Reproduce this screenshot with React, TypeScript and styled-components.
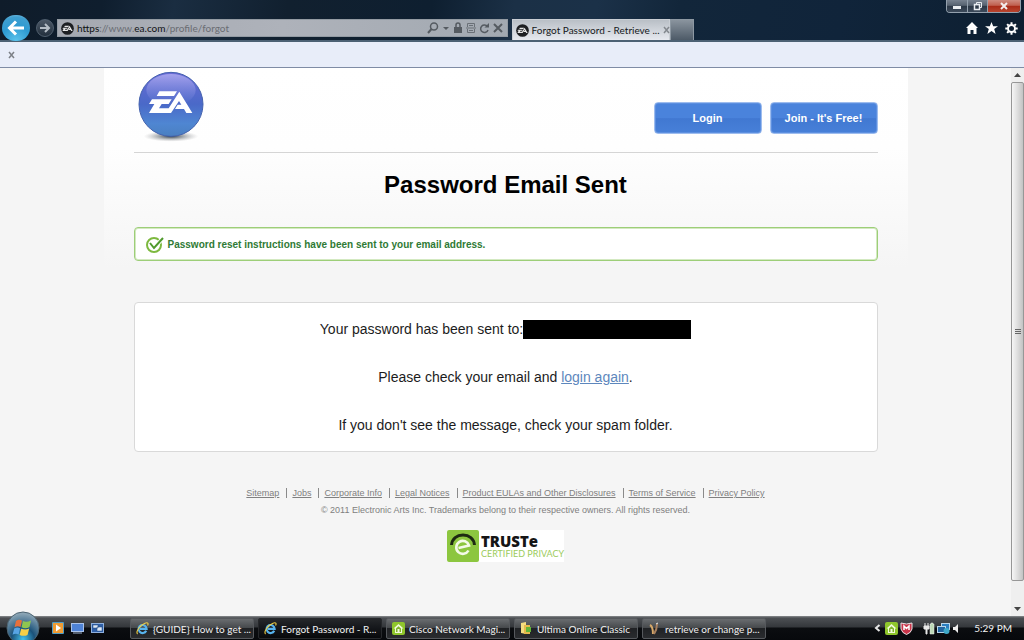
import React from "react";
import styled, { createGlobalStyle, css } from "styled-components";

const GlobalStyle = createGlobalStyle`
  *, *::before, *::after { box-sizing: border-box; }
  body { margin: 0; background: #f5f5f5; font-family: "Liberation Sans", Arial, sans-serif; }
  button { font: inherit; border: 0; padding: 0; background: none; color: inherit; cursor: pointer; }
  p, h1, ul { margin: 0; padding: 0; }
  svg { display: block; flex: none; }
`;

const uiFont = css`
  font-family: Lato, "Open Sans", sans-serif;
  font-size: 10px;
`;

const Desktop = styled.div`
  display: flex;
  flex-direction: column;
  height: 100vh;
  overflow: hidden;
`;

/* Browser frame */

const Chrome = styled.header`
  ${uiFont}
  flex: none;
  display: flex;
  flex-direction: column;
  height: 42px;
  border-bottom: 2px solid #4c6174;
  background: linear-gradient(100deg, #0f1c2a 0%, #0f1e2e 10%, #1a2d41 17%, #11202f 28%, #0e1f30 42%, #1b3046 50%, #1b3148 58%, #12263a 66%, #10243a 82%, #0d1f31 100%);
`;

const TitleBar = styled.div`
  display: flex;
  justify-content: flex-end;
  height: 17px;
  padding-right: 3px;
`;

const WindowButtons = styled.div`
  display: flex;
  height: 13px;
  border: 1px solid #93a0ad;
  border-top: 0;
  border-radius: 0 0 4px 4px;
  overflow: hidden;
`;

const WindowButton = styled.button<{ $close?: boolean }>`
  display: flex;
  align-items: center;
  justify-content: center;
  width: ${(p) => (p.$close ? 33 : 20)}px;
  border-left: ${(p) => (p.$close ? "1px solid #93a0ad" : "0")};
  background: ${(p) =>
    p.$close
      ? "linear-gradient(#cf8c80 0, #c0604f 45%, #a82a17 50%, #b8452f 100%)"
      : "linear-gradient(#76818f 0, #566270 45%, #2b3746 50%, #3c4a5b 100%)"};
  & + & { border-left: 1px solid #93a0ad; }
`;

const NavRow = styled.div`
  display: flex;
  align-items: center;
  height: 24px;
`;

const BackButton = styled.button`
  display: flex;
  align-items: center;
  justify-content: center;
  flex: none;
  width: 28px;
  height: 26px;
  margin: 0 6px 0 2px;
  border-radius: 14px;
  background: radial-gradient(circle at 50% 100%, #5cc3ec 0, #2e9bd2 50%, #3f9fd0 80%, #8cc6e2 100%);
`;

const ForwardButton = styled.button`
  display: flex;
  align-items: center;
  justify-content: center;
  flex: none;
  width: 18px;
  height: 18px;
  margin-right: 3px;
  border: 1px solid #51606f;
  border-radius: 9px;
  background: linear-gradient(#4c5866, #222f3d);
`;

const AddressBar = styled.div`
  display: flex;
  align-items: center;
  gap: 3px;
  flex: none;
  width: 44%;
  height: 18px;
  padding: 0 4px 0 3px;
  border: 1px solid #939ba3;
  background: linear-gradient(90deg, #a5a9b1, #aeb2ba 50%, #a2a9b1);
`;

const AddressText = styled.div`
  flex: 1;
  min-width: 0;
  color: #6a6d73;
  white-space: nowrap;
  overflow: hidden;
  b { font-weight: 400; color: #101214; }
`;

const AddressIcons = styled.div`
  display: flex;
  align-items: center;
  gap: 3px;
`;

const IconButton = styled.button`
  display: flex;
  align-items: center;
  justify-content: center;
`;

const Tabs = styled.div`
  display: flex;
  flex: 1;
  min-width: 0;
  align-self: stretch;
  margin-left: 4px;
  padding-top: 3px;
`;

const Tab = styled.div`
  display: flex;
  align-items: center;
  gap: 3px;
  width: 158px;
  padding: 0 4px 0 3px;
  border: 1px solid #c9ced4;
  border-bottom: 0;
  color: #15181b;
  white-space: nowrap;
  background: linear-gradient(#b9bfc6, #e6e9ef);
  span { flex: 1; }
`;

const NewTab = styled.button`
  width: 24px;
  border: 1px solid #8d98a2;
  border-bottom: 0;
  background: linear-gradient(#8a949e, #4d5a67);
`;

const Tools = styled.div`
  display: flex;
  align-items: center;
  gap: 7px;
  padding-right: 6px;
`;

const FindBar = styled.div`
  ${uiFont}
  flex: none;
  display: flex;
  align-items: center;
  height: 26px;
  padding-left: 8px;
  border-bottom: 1px solid #7f8ca5;
  background: #e8edf9;
`;

/* Page */

const Viewport = styled.div`
  flex: 1;
  min-height: 0;
  display: flex;
  background: #f5f5f5;
`;

const Scroller = styled.main`
  flex: 1;
  min-width: 0;
  overflow: hidden;
`;

const Sheet = styled.div`
  max-width: 804px;
  margin: 0 auto;
  padding: 0 30px;
  background: linear-gradient(#fff 0, #fefefe 80px, #f5f5f5 200px);
`;

const SiteHeader = styled.div`
  display: flex;
  align-items: flex-start;
  justify-content: space-between;
  height: 85px;
  padding: 2px 0 0 2px;
  border-bottom: 1px solid #d5d5d5;
`;

const SiteButtons = styled.div`
  display: flex;
  gap: 8px;
  padding-top: 32px;
`;

const SiteButton = styled.button`
  width: 108px;
  height: 32px;
  border: 1px solid #9dbcee;
  border-radius: 4px;
  box-shadow: inset 0 0 0 1px #5c8fe0;
  background: linear-gradient(#4a83dc 0, #4a83dc 50%, #4178d2 52%, #4780d8 100%);
  color: #fff;
  font-size: 11px;
  font-weight: 700;
`;

const Title = styled.h1`
  padding: 18px 0 28px;
  color: #000;
  font-size: 24px;
  line-height: 28px;
  text-align: center;
`;

const Notice = styled.div`
  display: flex;
  align-items: center;
  gap: 3px;
  height: 34px;
  padding: 0 0 0 10px;
  border: 1px solid #9dce78;
  border-radius: 4px;
  box-shadow: inset 0 0 0 1px #d3e9c1;
  background: #fff;
  color: #2f7a35;
  font-size: 10px;
  font-weight: 700;
`;

const Card = styled.section`
  display: flex;
  flex-direction: column;
  align-items: center;
  gap: 28px;
  margin-top: 41px;
  padding: 16px;
  border: 1px solid #d9d9d9;
  border-radius: 4px;
  background: #fff;
  color: #1c1c1c;
  font-size: 14px;
  line-height: 20px;
`;

const Line = styled.p`
  display: flex;
  align-items: center;
  white-space: pre;
  a { color: #5d87bd; }
`;

const Redacted = styled.span`
  width: 168px;
  height: 19px;
  background: #000;
`;

const Footer = styled.footer`
  display: flex;
  flex-direction: column;
  align-items: center;
  padding-top: 36px;
  color: #808080;
  font-size: 9px;
  line-height: 12px;
`;

const FooterLinks = styled.ul`
  display: flex;
  align-items: center;
  list-style: none;
  line-height: 10px;
  li + li { margin-left: 7px; padding-left: 5px; border-left: 1px solid #8a8a8a; }
  a { color: inherit; }
`;

const Copyright = styled.p`
  margin-top: 6px;
`;

const TrustBadge = styled.a`
  display: flex;
  align-items: center;
  gap: 2px;
  height: 32px;
  margin-top: 14px;
  background: #fff;
  text-decoration: none;
`;

const TrustText = styled.span`
  display: flex;
  flex-direction: column;
  white-space: nowrap;
`;

const TrustName = styled.strong`
  color: #151515;
  font-family: "Open Sans", sans-serif;
  font-size: 15px;
  line-height: 14px;
  font-weight: 800;
`;

const TrustNote = styled.span`
  color: #9ccb5b;
  font-family: Lato, sans-serif;
  font-size: 9px;
  line-height: 11px;
`;

const ScrollTrack = styled.div`
  flex: none;
  display: flex;
  flex-direction: column;
  width: 13px;
  background: #efefef;
`;

const ScrollArrow = styled.button`
  display: flex;
  align-items: center;
  justify-content: center;
  height: 14px;
`;

const Thumb = styled.div`
  display: flex;
  align-items: center;
  justify-content: center;
  flex: 1;
  margin-bottom: 21px;
  border: 1px solid #979797;
  border-radius: 2px;
  background: linear-gradient(90deg, #f6f6f6, #dedede 50%, #c3c3c3);
`;

/* Taskbar */

const Taskbar = styled.nav`
  ${uiFont}
  position: relative;
  flex: none;
  display: flex;
  align-items: center;
  height: 24px;
  padding: 0 12px 0 52px;
  color: #f2f2f2;
  background: linear-gradient(#8a8d90 0, #4c4f53 2px, #34373b 11px, #0b0d10 12px, #07090c 100%);
`;

const StartButton = styled.button`
  position: absolute;
  left: 6px;
  top: -5px;
`;

const QuickLaunch = styled.div`
  display: flex;
  gap: 7px;
  width: 78px;
`;

const TaskList = styled.div`
  display: flex;
  flex: 1;
  min-width: 0;
  gap: 4px;
  align-self: stretch;
  padding: 2px 0 1px;
`;

const Task = styled.button<{ $active?: boolean }>`
  display: flex;
  align-items: center;
  gap: 4px;
  flex: 0 1 124px;
  min-width: 0;
  padding: 0 2px 0 5px;
  border: 1px solid ${(p) => (p.$active ? "#26282b" : "#56595d")};
  border-radius: 2px;
  background: ${(p) =>
    p.$active
      ? "linear-gradient(#25272a, #14161a 50%, #08090b)"
      : "linear-gradient(#6a6d70, #474a4d 45%, #202225 50%, #2a2c2f)"};
  span { white-space: nowrap; }
`;

const Tray = styled.div`
  display: flex;
  align-items: center;
  gap: 2px;
`;

const Clock = styled.time`
  margin-left: 12px;
  white-space: nowrap;
`;

const EA_PATH =
  "M64 58H117L108 72H56ZM42 82H101L92 96H71L63 109H92L124 59L163 123H145L138 111H111L119 98H130L123 87L99 123H33L49 96H33Z";

const EaMark = () => (
  <svg width="13" height="13" viewBox="0 0 198 198">
    <circle cx="99" cy="99" r="97" fill="#1d1f22" />
    <path d={EA_PATH} fill="#e6e6e6" transform="translate(-18 -12) scale(1.2)" />
  </svg>
);

const EaLogo = () => (
  <svg width="70" height="72" viewBox="-6 -6 210 216" role="img" aria-label="EA">
    <defs>
      <linearGradient id="orb" x1="0" y1="0" x2="0" y2="1">
        <stop offset="0" stopColor="#6b6bd6" />
        <stop offset=".5" stopColor="#4a69c8" />
        <stop offset=".8" stopColor="#4f86d2" />
        <stop offset="1" stopColor="#4a7fc0" />
      </linearGradient>
      <linearGradient id="orbShine" x1="0" y1="0" x2="0" y2="1">
        <stop offset="0" stopColor="#b3b0f2" stopOpacity=".8" />
        <stop offset="1" stopColor="#7f8fe0" stopOpacity="0" />
      </linearGradient>
      <radialGradient id="orbShadow">
        <stop offset="0" stopColor="#1e2d3c" stopOpacity=".95" />
        <stop offset="1" stopColor="#999" stopOpacity="0" />
      </radialGradient>
    </defs>
    <ellipse cx="99" cy="193" rx="82" ry="16" fill="url(#orbShadow)" />
    <circle cx="99" cy="97" r="96" fill="url(#orb)" stroke="#4462ae" strokeWidth="3" />
    <ellipse cx="99" cy="54" rx="74" ry="48" fill="url(#orbShine)" />
    <path d={EA_PATH} fill="#fff" />
  </svg>
);

const CheckMark = () => (
  <svg width="20" height="18" viewBox="0 0 20 18" fill="none">
    <circle cx="9" cy="10" r="7" stroke="#7db93f" strokeWidth="2" />
    <path d="M5 8L9 13L18 3" stroke="#fff" strokeWidth="4" />
    <path d="M5 8L9 13L18 3" stroke="#4f9a2d" strokeWidth="2" />
  </svg>
);

const IeIcon = () => (
  <svg width="13" height="13" viewBox="0 0 13 13" fill="none">
    <path d="M10.2 8.8A4 4 0 1 1 10.6 6.8H4" stroke="#58b4ee" strokeWidth="2.2" />
    <path d="M1.6 12C-.6 10 4 3 9 1.2C12 .2 12.6 1.4 11.6 3.4" stroke="#f0cf45" strokeWidth="1.1" />
  </svg>
);

const HouseIcon = () => (
  <svg width="13" height="13" viewBox="0 0 13 13">
    <rect width="13" height="13" rx="2" fill="#8fc62c" />
    <path d="M1.5 6.5L6.5 2L11.5 6.5H10V11H3V6.5Z" fill="#f2fadb" />
    <path d="M4 6.5L6.5 4.2L9 6.5V10H4Z" fill="#7eb52a" />
    <rect x="5.5" y="7" width="2" height="3" fill="#f2fadb" />
  </svg>
);

const FolderIcon = () => (
  <svg width="13" height="13" viewBox="0 0 13 13">
    <path d="M1 1L6 0V12L1 11Z" fill="#f4dc80" />
    <path d="M4 3H10V12H4Z" fill="#e5ba4c" />
    <path d="M6 5H11V10H6Z" fill="#63b637" />
  </svg>
);

const QuillIcon = () => (
  <svg width="13" height="13" viewBox="0 0 13 13" fill="none">
    <path d="M2 3C4 4 5 7 5 12" stroke="#d6a869" strokeWidth="2" />
    <path d="M9 2C9 5 8 9 6 12" stroke="#a77f5d" strokeWidth="2" />
    <path d="M8 2L10 1" stroke="#eee" />
  </svg>
);

const StartOrb = () => (
  <svg width="34" height="34" viewBox="0 0 34 34">
    <defs>
      <radialGradient id="start" cx=".5" cy=".85" r=".8">
        <stop offset="0" stopColor="#43c2ee" />
        <stop offset=".45" stopColor="#1b527a" />
        <stop offset="1" stopColor="#8ba5b5" />
      </radialGradient>
    </defs>
    <circle cx="17" cy="17" r="16" fill="url(#start)" stroke="#4d6472" />
    <path d="M10 10C12 8.500 14 8.500 16 9.500L14.500 16C12.500 15 10.500 15 8.500 16.200Z" fill="#e8703c" />
    <path d="M17 10C19 11 22 11 25 9.500L23.500 16C21 17.500 18 17.500 15.500 16.300Z" fill="#8fc550" />
    <path d="M8.200 17.500C10.500 16.300 12.500 16.300 14.200 17.300L12.600 23.500C10.500 22.500 8.500 22.700 6.500 23.700Z" fill="#58a4e4" />
    <path d="M15.200 17.800C18 19 21 18.800 23.200 17.500L21.500 24C19 25.300 16 25 13.600 24Z" fill="#f6cf48" />
  </svg>
);

const TrustIcon = () => (
  <svg width="32" height="32" viewBox="0 0 32 32" fill="none">
    <rect width="32" height="32" rx="2" fill="#8cc63f" />
    <path d="M4.500 15C5 8.500 10 5 16 5S27 8.500 27.500 15" stroke="#1d2a12" strokeWidth="3" />
    <path d="M21.500 20.500A6.500 6.500 0 1 1 22 15.500L11.500 18" stroke="#f4fae9" strokeWidth="2.600" />
  </svg>
);

const footerLinks = [
  "Sitemap",
  "Jobs",
  "Corporate Info",
  "Legal Notices",
  "Product EULAs and Other Disclosures",
  "Terms of Service",
  "Privacy Policy",
];

const tasks = [
  { label: "{GUIDE} How to get ...", icon: <IeIcon /> },
  { label: "Forgot Password - R...", icon: <IeIcon />, active: true },
  { label: "Cisco Network Magi...", icon: <HouseIcon /> },
  { label: "Ultima Online Classic", icon: <FolderIcon /> },
  { label: "retrieve or change p...", icon: <QuillIcon /> },
];

export default function App() {
  return (
    <Desktop>
      <GlobalStyle />
      <Chrome>
        <TitleBar>
          <WindowButtons>
            <WindowButton aria-label="Minimize">
              <svg width="10" height="10"><path d="M1 5H9V8H1Z" fill="#e9edf1" /></svg>
            </WindowButton>
            <WindowButton aria-label="Restore">
              <svg width="10" height="10" fill="none" stroke="#e9edf1"><path d="M3.500 3V1.500H8.500V6.500H7" /><path d="M1.500 3.500H6.500V8.500H1.500Z" strokeWidth="1.500" /></svg>
            </WindowButton>
            <WindowButton $close aria-label="Close">
              <svg width="10" height="10"><path d="M2 2L8 8M8 2L2 8" stroke="#f4eeee" strokeWidth="2" /></svg>
            </WindowButton>
          </WindowButtons>
        </TitleBar>
        <NavRow>
          <BackButton aria-label="Back">
            <svg width="18" height="16" viewBox="0 0 18 16" fill="none" stroke="#fff" strokeWidth="3"><path d="M2 8H17M9 1.500L2.500 8L9 14.500" /></svg>
          </BackButton>
          <ForwardButton aria-label="Forward">
            <svg width="12" height="10" viewBox="0 0 12 10" fill="none" stroke="#b4bcc4" strokeWidth="2"><path d="M1 5H10M6 1L10 5L6 9" /></svg>
          </ForwardButton>
          <AddressBar>
            <EaMark />
            <AddressText><b>https</b>://www.<b>ea.com</b>/profile/forgot</AddressText>
            <AddressIcons>
              <IconButton aria-label="Search">
                <svg width="12" height="12" fill="none" stroke="#555b61"><circle cx="7" cy="4.500" r="3.500" strokeWidth="1.500" /><path d="M4.500 7L1 11" strokeWidth="2" /></svg>
              </IconButton>
              <IconButton aria-label="Search options">
                <svg width="8" height="12"><path d="M1 5H7L4 8Z" fill="#555b61" /></svg>
              </IconButton>
              <svg width="10" height="12"><path d="M1 5H9V11H1Z" fill="#555b61" /><path d="M3 6V3A2 2 0 0 1 7 3V6" fill="none" stroke="#555b61" strokeWidth="1.500" /></svg>
              <IconButton aria-label="Compatibility view">
                <svg width="10" height="12" fill="none" stroke="#6a7077"><path d="M1.500 5V1.500H8.500V5M1.500 7V10.500H8.500V7M3 3.500H7M0 6H10M3 8.500H7" /></svg>
              </IconButton>
              <IconButton aria-label="Refresh">
                <svg width="11" height="12" fill="none" stroke="#555b61"><path d="M8.500 4.500A3.800 3.800 0 1 0 9 8" strokeWidth="1.500" /><path d="M10 1V5.500H5.500Z" fill="#555b61" stroke="none" /></svg>
              </IconButton>
              <IconButton aria-label="Stop">
                <svg width="10" height="12"><path d="M1 2L9 10M9 2L1 10" stroke="#555b61" strokeWidth="2" /></svg>
              </IconButton>
            </AddressIcons>
          </AddressBar>
          <Tabs>
            <Tab>
              <EaMark />
              <span>Forgot Password - Retrieve ...</span>
              <IconButton aria-label="Close tab">
                <svg width="7" height="8"><path d="M1 1L6 7M6 1L1 7" stroke="#83888e" strokeWidth="1.500" /></svg>
              </IconButton>
            </Tab>
            <NewTab aria-label="New tab" />
          </Tabs>
          <Tools>
            <IconButton aria-label="Home">
              <svg width="12" height="12" viewBox="0 0 12 12"><path d="M6 0L12 6H10.500V12H7.500V8H4.500V12H1.500V6H0Z" fill="#fff" /></svg>
            </IconButton>
            <IconButton aria-label="Favorites">
              <svg width="13" height="12" viewBox="0 0 13 12"><path d="M6.500 0L8.200 4.200H13L9.200 7L10.600 12L6.500 9L2.400 12L3.800 7L0 4.200H4.800Z" fill="#fff" /></svg>
            </IconButton>
            <IconButton aria-label="Tools">
              <svg width="13" height="13" viewBox="-6.500 -6.500 13 13" fill="none" stroke="#fff">
                <circle r="3.500" strokeWidth="2" />
                <path d="M0 -6.200V-4M0 6.200V4M-6.200 0H-4M6.200 0H4M-4.400 -4.400L-3 -3M4.400 4.400L3 3M-4.400 4.400L-3 3M4.400 -4.400L3 -3" strokeWidth="2" />
              </svg>
            </IconButton>
          </Tools>
        </NavRow>
      </Chrome>
      <FindBar>
        <IconButton aria-label="Close bar">
          <svg width="7" height="8"><path d="M1 1L6 7M6 1L1 7" stroke="#7c8087" strokeWidth="1.500" /></svg>
        </IconButton>
      </FindBar>

      <Viewport>
        <Scroller>
          <Sheet>
            <SiteHeader>
              <EaLogo />
              <SiteButtons>
                <SiteButton>Login</SiteButton>
                <SiteButton>Join - It's Free!</SiteButton>
              </SiteButtons>
            </SiteHeader>
            <Title>Password Email Sent</Title>
            <Notice role="status">
              <CheckMark />
              <p>Password reset instructions have been sent to your email address.</p>
            </Notice>
            <Card>
              <Line>Your password has been sent to:<Redacted /></Line>
              <Line>Please check your email and <a href="#login">login again</a>.</Line>
              <Line>If you don't see the message, check your spam folder.</Line>
            </Card>
            <Footer>
              <FooterLinks>
                {footerLinks.map((label) => (
                  <li key={label}><a href="#footer">{label}</a></li>
                ))}
              </FooterLinks>
              <Copyright>© 2011 Electronic Arts Inc. Trademarks belong to their respective owners. All rights reserved.</Copyright>
              <TrustBadge href="#truste">
                <TrustIcon />
                <TrustText>
                  <TrustName>TRUSTe</TrustName>
                  <TrustNote>CERTIFIED PRIVACY</TrustNote>
                </TrustText>
              </TrustBadge>
            </Footer>
          </Sheet>
        </Scroller>
        <ScrollTrack>
          <ScrollArrow aria-label="Scroll up">
            <svg width="7" height="4"><path d="M0 4L3.500 0L7 4Z" fill="#444" /></svg>
          </ScrollArrow>
          <Thumb>
            <svg width="6" height="6"><path d="M0 .5H6M0 2.500H6M0 4.500H6" stroke="#666" /></svg>
          </Thumb>
          <ScrollArrow aria-label="Scroll down">
            <svg width="7" height="4"><path d="M0 0H7L3.500 4Z" fill="#444" /></svg>
          </ScrollArrow>
        </ScrollTrack>
      </Viewport>

      <Taskbar>
        <StartButton aria-label="Start"><StartOrb /></StartButton>
        <QuickLaunch>
          <IconButton aria-label="Media player">
            <svg width="12" height="12"><rect width="12" height="12" rx="1" fill="#4e9bc4" /><rect x="1" y="1" width="10" height="10" fill="#ef9b33" /><path d="M4 2.500L9 6L4 9.500Z" fill="#fff" /></svg>
          </IconButton>
          <IconButton aria-label="Show desktop">
            <svg width="13" height="12"><rect x=".5" y="1.500" width="12" height="8" fill="#4f83d6" stroke="#a9c2ea" /><path d="M2 11H11" stroke="#9fb3cf" /></svg>
          </IconButton>
          <IconButton aria-label="Switch windows">
            <svg width="13" height="12"><rect x=".5" y="1.500" width="12" height="9" fill="#2f5fa6" stroke="#8fb0dc" /><path d="M2 3H7V6H2ZM6 5H11V9H6Z" fill="#dce8f7" stroke="#23497f" strokeWidth=".5" /></svg>
          </IconButton>
        </QuickLaunch>
        <TaskList>
          {tasks.map((t) => (
            <Task key={t.label} $active={t.active}>
              {t.icon}
              <span>{t.label}</span>
            </Task>
          ))}
        </TaskList>
        <Tray>
          <IconButton aria-label="Show hidden icons">
            <svg width="10" height="10" fill="none" stroke="#e6e6e6"><path d="M6.500 2L3 5L6.500 8" strokeWidth="2" /></svg>
          </IconButton>
          <HouseIcon />
          <svg width="13" height="13" viewBox="0 0 13 13"><path d="M1 1L6.500 2L12 1V7Q11 11 6.500 12.500Q2 11 1 7Z" fill="#c9354a" stroke="#e8e0e2" /><path d="M4 8V4L6.500 6.500L9 4V8" fill="none" stroke="#fff" strokeWidth="1.500" /></svg>
          <svg width="20" height="13" viewBox="-8 0 20 13"><path d="M2 1V5M5 1V5M1 4H6V7H4V12H3V7H1Z" fill="#e8e8e8" stroke="#e8e8e8" /><path d="M7 2H8V1H10V2H11V12H7Z" fill="#bcd8b5" stroke="#eee" strokeWidth=".5" /></svg>
          <svg width="13" height="13" viewBox="0 0 13 13"><rect x="4.500" y="1.500" width="8" height="6" fill="#2c7fc0" stroke="#b8d5ea" /><rect x=".5" y="4.500" width="8" height="6" fill="#2365a0" stroke="#b8d5ea" /><circle cx="9.500" cy="9" r="3" fill="#3fa9c9" /></svg>
          <svg width="8" height="13" viewBox="0 0 8 13"><path d="M1 5H3L6 2V11L3 8H1Z" fill="#eee" /></svg>
          <Clock>5:29 PM</Clock>
        </Tray>
      </Taskbar>
    </Desktop>
  );
}
